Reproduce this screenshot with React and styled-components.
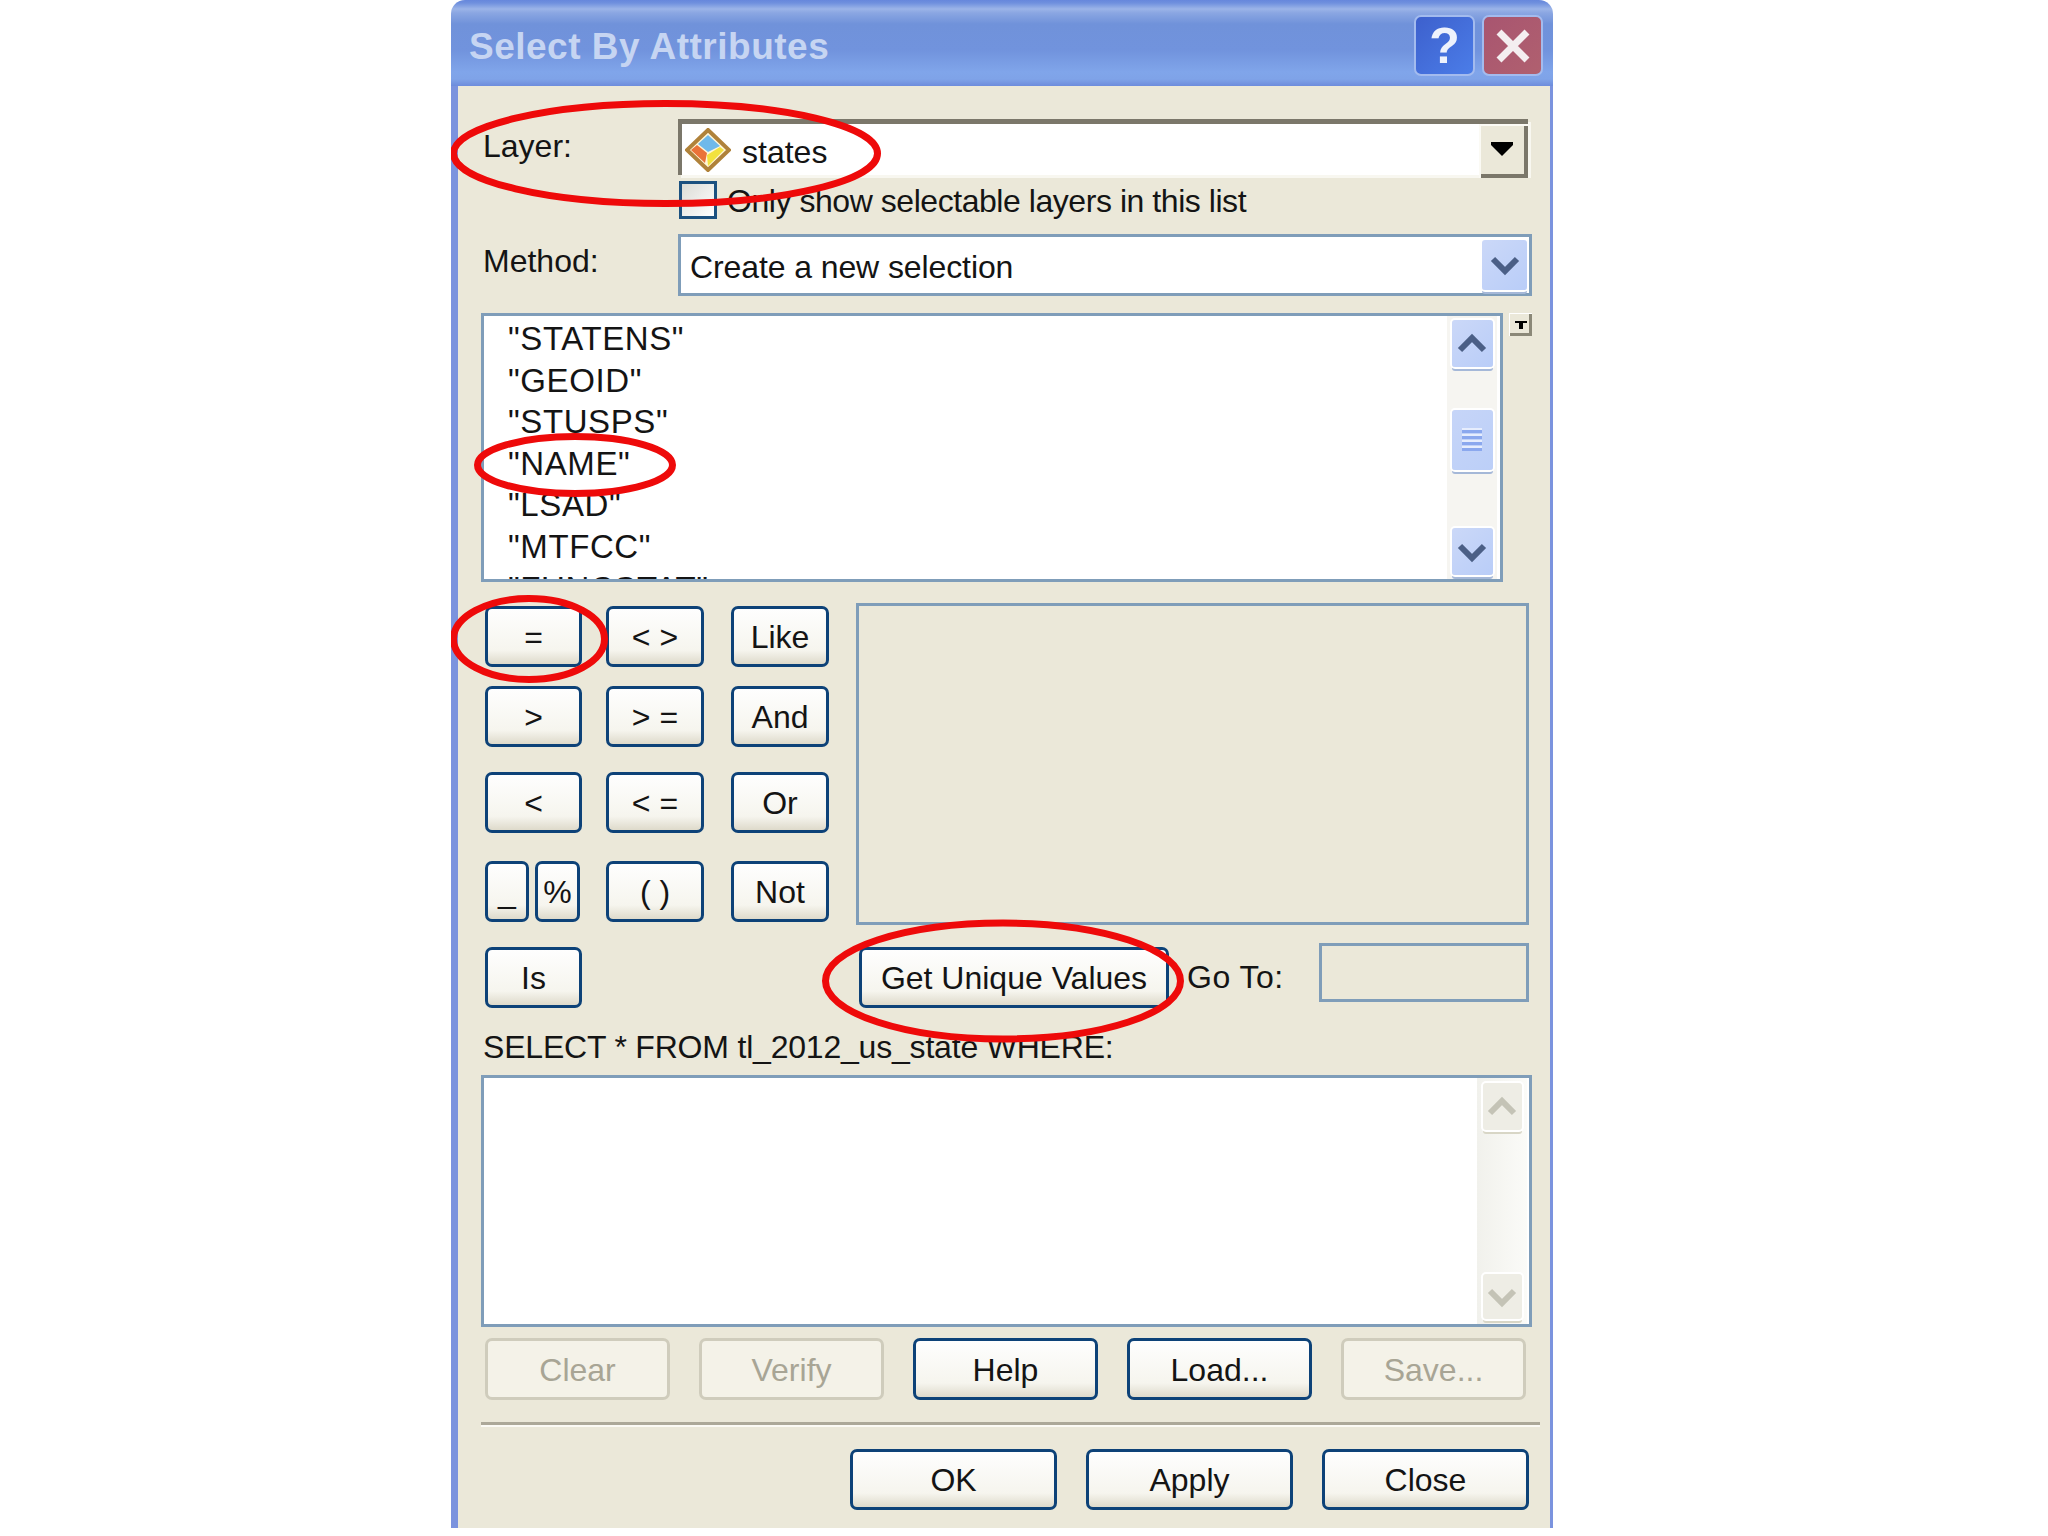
import React from "react";
import styled, { createGlobalStyle } from "styled-components";

const Global = createGlobalStyle`
  html, body { margin: 0; padding: 0; background: #fff; }
  * { box-sizing: border-box; }
  body { font-family: "Liberation Sans", Arial, sans-serif; font-size: 32px; color: #141414; }
`;

const Page = styled.div`
  width: 2048px;
  height: 1536px;
  padding-left: 451px;
  background: #fff;
`;
const Dialog = styled.div`
  position: relative;
  width: 1102px;
  height: 1528px;
  display: flex;
  flex-direction: column;
  border-radius: 14px 14px 0 0;
  overflow: hidden;
`;
const TitleBar = styled.div`
  height: 86px;
  flex: none;
  padding: 11px 10px 0 18px;
  display: flex;
  align-items: flex-start;
  justify-content: space-between;
  background: linear-gradient(#6687dc 0, #6f90de 3px, #9bb4e8 9px, #8aa6e2 13px, #7092da 24px, #7193dd 50px, #80a5ea 72px, #7fa3e8 79px, #6d8cdc 86px);
`;
const Title = styled.div`
  font-size: 37px;
  font-weight: 700;
  line-height: 50px;
  margin-top: 11px;
  color: #c6d5f2;
  letter-spacing: 0.5px;
`;
const CaptionButtons = styled.div`
  display: flex;
  gap: 7px;
  margin-top: 4px;
`;
const CaptionButton = styled.div`
  width: 61px;
  height: 61px;
  display: flex;
  align-items: center;
  justify-content: center;
  border: 2px solid #a3bbee;
  border-radius: 7px;
  background: ${(p) => (p.$danger ? "linear-gradient(135deg,#a85570,#b0606f)" : "linear-gradient(135deg,#3d60cd,#4b7de8)")};
  color: #eef2fc;
  font-size: 50px;
  font-weight: 700;
`;
const Body = styled.div`
  flex: 1;
  background: #ebe8d9;
  border-left: 7px solid #7b93de;
  border-right: 3px solid #7b93de;
  padding: 33px 18px 0 23px;
`;
const FormRow = styled.div`
  display: grid;
  grid-template-columns: 197px 1fr;
  align-items: center;
  margin-top: ${(p) => p.$top || 0}px;
`;
const FieldLabel = styled.div`
  padding-left: 2px;
  margin-top: ${(p) => p.$shift || 0}px;
`;
const ClassicCombo = styled.div`
  height: 56px;
  margin-right: 4px;
  display: flex;
  align-items: stretch;
  background: #fff;
  border-top: 5px solid #7b776a;
  border-left: 4px solid #7b776a;
  box-shadow: 3px 3px 0 #f8f7f0;
`;
const LayerValue = styled.div`
  flex: 1;
  display: flex;
  align-items: center;
  padding-left: 3px;
  gap: 11px;
`;
const LayerName = styled.span`
  margin-top: 6px;
`;
const ClassicArrow = styled.div`
  width: 49px;
  display: flex;
  align-items: center;
  justify-content: center;
  background: #ebe8d9;
  box-shadow: inset 2px 2px 0 #fbfaf4, inset -4px -4px 0 #7b776a;
  margin-bottom: -3px;
  padding: 0 4px 4px 0;
`;
const CheckBox = styled.div`
  width: 38px;
  height: 38px;
  border: 3px solid #1c5180;
  background: linear-gradient(135deg, #dcdcd6, #fff);
`;
const CheckLine = styled.div`
  display: flex;
  align-items: center;
  gap: 10px;
  margin-left: 1px;
`;
const CheckText = styled.span`
  letter-spacing: -0.45px;
  line-height: 34px;
  margin-top: 2px;
`;
const XpCombo = styled.div`
  height: 62px;
  display: flex;
  align-items: center;
  justify-content: space-between;
  padding: 0 2px 0 9px;
  background: #fff;
  border: 3px solid #7f9db9;
`;
const ComboText = styled.span`
  margin-top: 4px;
  letter-spacing: -0.1px;
`;
const ScrollBtn = styled.div`
  flex: none;
  width: ${(p) => p.$w || 41}px;
  height: ${(p) => p.$h || 47}px;
  display: flex;
  align-items: center;
  justify-content: center;
  border-radius: 3px;
  background: ${(p) => (p.$off ? "#eeede5" : "linear-gradient(135deg,#cbd8f8,#b9cdf8)")};
  box-shadow: 0 0 0 2px #fff, ${(p) => (p.$off ? "0 4px 0 #d8d6c6" : "0 4px 0 #a5b8d8")};
`;
const ListLine = styled.div`
  display: flex;
  align-items: flex-start;
  gap: 6px;
  margin-top: 17px;
`;
const ListBox = styled.div`
  width: 1022px;
  height: 269px;
  display: flex;
  background: #fff;
  border: 3px solid #7f9db9;
`;
const ListRows = styled.div`
  flex: 1;
  padding: 2px 0 0 24px;
  overflow: hidden;
`;
const ListRow = styled.div`
  height: 41.6px;
  font-size: 33px;
  letter-spacing: 0.6px;
  line-height: 41.6px;
  white-space: nowrap;
`;
const ScrollTrack = styled.div`
  flex: none;
  width: ${(p) => p.$w || 50}px;
  margin-right: ${(p) => p.$mr || 3}px;
  padding: ${(p) => p.$pad || 4}px 0;
  display: flex;
  flex-direction: column;
  align-items: center;
  background: ${(p) => (p.$off ? "linear-gradient(90deg,#f1f1ec,#fbfbf8)" : "#f6f5f1")};
`;
const Thumb = styled.div`
  width: 41px;
  height: 60px;
  margin-top: 43px;
  margin-bottom: auto;
  display: flex;
  flex-direction: column;
  align-items: center;
  justify-content: center;
  gap: 3px;
  border-radius: 3px;
  background: linear-gradient(135deg, #c6d5f8, #bccff8);
  box-shadow: 0 0 0 2px #fff, 0 4px 0 #a5b8d8;
`;
const Grip = styled.div`
  width: 20px;
  height: 3px;
  background: #8ba8ee;
  box-shadow: 0 -2px 0 #e6edfd;
`;
const TinyDrop = styled.div`
  width: 23px;
  height: 23px;
  display: flex;
  align-items: center;
  justify-content: center;
  background: #ebe8d9;
  box-shadow: inset 1px 1px 0 #fff, inset -3px -3px 0 #8b8878;
`;
const CalcTop = styled.div`
  display: grid;
  grid-template-columns: 375px 1fr;
  margin-top: 21px;
`;
const Keys = styled.div`
  padding: 3px 0 0 4px;
`;
const KeyRow = styled.div`
  display: grid;
  grid-template-columns: 97px 98px 101px;
  column-gap: 24px;
  margin-top: ${(p) => p.$top || 0}px;
  & > :last-child { margin-left: 3px; }
`;
const KeyPair = styled.div`
  display: grid;
  grid-template-columns: 44px 45px;
  column-gap: 6px;
  margin: 0 !important;
`;
const Btn = styled.div`
  height: ${(p) => p.$h || 61}px;
  width: ${(p) => (p.$w ? `${p.$w}px` : "auto")};
  margin-top: ${(p) => p.$top || 0}px;
  margin-left: ${(p) => p.$left || 0}px;
  padding-top: 2px;
  display: flex;
  align-items: center;
  justify-content: center;
  border: 3px solid ${(p) => (p.disabled ? "#cfccbc" : "#0d4278")};
  border-radius: 7px;
  background: ${(p) => (p.disabled ? "#f4f2e8" : "linear-gradient(#fefefe, #f6f5ee 75%, #dedacb)")};
  color: ${(p) => (p.disabled ? "#a8a595" : "#141414")};
  white-space: nowrap;
`;
const ValuesBox = styled.div`
  height: 322px;
  margin-right: 3px;
  border: 3px solid #7f9db9;
`;
const CalcBottom = styled.div`
  display: flex;
  align-items: flex-start;
  margin-top: 18px;
  padding-left: 4px;
`;
const GoToLabel = styled.div`
  margin: 4px 0 0 18px;
  line-height: 61px;
  letter-spacing: 0.5px;
`;
const GoToBox = styled.div`
  width: 210px;
  height: 59px;
  margin: 0 3px 0 auto;
  border: 3px solid #7f9db9;
`;
const SqlLabel = styled.div`
  height: 67px;
  padding: 22px 0 0 2px;
  line-height: 34px;
  letter-spacing: -0.2px;
  white-space: nowrap;
`;
const SqlBox = styled.div`
  height: 252px;
  display: flex;
  justify-content: flex-end;
  background: #fff;
  border: 3px solid #7f9db9;
`;
const Spacer = styled.div`
  flex: 1;
`;
const ActionRow = styled.div`
  display: grid;
  grid-template-columns: repeat(5, 185px);
  column-gap: 29px;
  margin-top: 11px;
  padding-left: 4px;
`;
const Separator = styled.div`
  height: 5px;
  margin: 22px -8px 0 0;
  background: #aca899;
  border-bottom: 2px solid #fbfaf5;
`;
const DialogRow = styled.div`
  display: flex;
  justify-content: flex-end;
  gap: 29px;
  margin: 22px 3px 0 0;
`;
const Annotations = styled.svg`
  position: absolute;
  inset: 0;
  pointer-events: none;
`;

const Chevron = ({ up, off }) => (
  <svg width="30" height="22" viewBox="0 0 30 22">
    <path
      d={up ? "M3 17 L15 5 L27 17" : "M3 5 L15 17 L27 5"}
      fill="none"
      stroke={off ? "#c4c3b6" : "#4b5f86"}
      strokeWidth="6"
    />
  </svg>
);

const LayerIcon = () => (
  <svg width="46" height="44" viewBox="0 0 46 44">
    <polygon points="23,2 44,22 23,42 2,22" fill="#fff6d8" stroke="#b0823a" strokeWidth="4" />
    <polygon points="23,7 35,18 23,24 13,16" fill="#6fb9ea" />
    <polygon points="12,17 22,25 20,35 6,22" fill="#ea7338" />
    <polygon points="35,19 39,22 23,38 22,27" fill="#f2e23e" />
  </svg>
);

const fields = ['"STATENS"', '"GEOID"', '"STUSPS"', '"NAME"', '"LSAD"', '"MTFCC"', '"FUNCSTAT"'];

export default function App() {
  return (
    <Page>
      <Global />
      <Dialog>
        <TitleBar>
          <Title>Select By Attributes</Title>
          <CaptionButtons>
            <CaptionButton>?</CaptionButton>
            <CaptionButton $danger>
              <svg width="36" height="36" viewBox="0 0 36 36">
                <path d="M4 4 L32 32 M32 4 L4 32" stroke="#f4eef0" strokeWidth="7" />
              </svg>
            </CaptionButton>
          </CaptionButtons>
        </TitleBar>
        <Body>
          <FormRow>
            <FieldLabel $shift={-2}>Layer:</FieldLabel>
            <ClassicCombo>
              <LayerValue>
                <LayerIcon />
                <LayerName>states</LayerName>
              </LayerValue>
              <ClassicArrow>
                <svg width="22" height="14" viewBox="0 0 22 14">
                  <path d="M0 0 H22 V3 L11 14 L0 3 Z" fill="#000" />
                </svg>
              </ClassicArrow>
            </ClassicCombo>
          </FormRow>
          <FormRow $top={6}>
            <span />
            <CheckLine>
              <CheckBox />
              <CheckText>Only show selectable layers in this list</CheckText>
            </CheckLine>
          </FormRow>
          <FormRow $top={15}>
            <FieldLabel $shift={-8}>Method:</FieldLabel>
            <XpCombo>
              <ComboText>Create a new selection</ComboText>
              <ScrollBtn $w={45} $h={50}>
                <Chevron />
              </ScrollBtn>
            </XpCombo>
          </FormRow>
          <ListLine>
            <ListBox>
              <ListRows>
                {fields.map((f) => (
                  <ListRow key={f}>{f}</ListRow>
                ))}
              </ListRows>
              <ScrollTrack>
                <ScrollBtn>
                  <Chevron up />
                </ScrollBtn>
                <Thumb>
                  <Grip />
                  <Grip />
                  <Grip />
                  <Grip />
                </Thumb>
                <ScrollBtn>
                  <Chevron />
                </ScrollBtn>
              </ScrollTrack>
            </ListBox>
            <TinyDrop>
              <svg width="12" height="8" viewBox="0 0 12 8">
                <path d="M0 0 H12 V2 H8 V8 H4 V2 H0 Z" fill="#000" />
              </svg>
            </TinyDrop>
          </ListLine>
          <CalcTop>
            <Keys>
              <KeyRow>
                <Btn>=</Btn>
                <Btn>&lt; &gt;</Btn>
                <Btn>Like</Btn>
              </KeyRow>
              <KeyRow $top={19}>
                <Btn>&gt;</Btn>
                <Btn>&gt; =</Btn>
                <Btn>And</Btn>
              </KeyRow>
              <KeyRow $top={25}>
                <Btn>&lt;</Btn>
                <Btn>&lt; =</Btn>
                <Btn>Or</Btn>
              </KeyRow>
              <KeyRow $top={28}>
                <KeyPair>
                  <Btn>_</Btn>
                  <Btn>%</Btn>
                </KeyPair>
                <Btn>( )</Btn>
                <Btn>Not</Btn>
              </KeyRow>
            </Keys>
            <ValuesBox />
          </CalcTop>
          <CalcBottom>
            <Btn $w={97} $top={4}>Is</Btn>
            <Btn $w={310} $top={4} $left={277}>Get Unique Values</Btn>
            <GoToLabel>Go To:</GoToLabel>
            <GoToBox />
          </CalcBottom>
          <SqlLabel>SELECT * FROM tl_2012_us_state WHERE:</SqlLabel>
          <SqlBox>
            <Spacer />
            <ScrollTrack $off $mr={2} $pad={5}>
              <ScrollBtn $off $w={39}>
                <Chevron up off />
              </ScrollBtn>
              <Spacer />
              <ScrollBtn $off $w={39} $h={45}>
                <Chevron off />
              </ScrollBtn>
            </ScrollTrack>
          </SqlBox>
          <ActionRow>
            <Btn disabled $h={62}>Clear</Btn>
            <Btn disabled $h={62}>Verify</Btn>
            <Btn $h={62}>Help</Btn>
            <Btn $h={62}>Load...</Btn>
            <Btn disabled $h={62}>Save...</Btn>
          </ActionRow>
          <Separator />
          <DialogRow>
            <Btn $w={207}>OK</Btn>
            <Btn $w={207}>Apply</Btn>
            <Btn $w={207}>Close</Btn>
          </DialogRow>
        </Body>
        <Annotations width="1102" height="1528">
          <g fill="none" stroke="#ee0a0a" strokeWidth="7">
            <ellipse cx="214.5" cy="153.5" rx="212" ry="50" />
            <ellipse cx="124" cy="465" rx="97.5" ry="28.5" />
            <ellipse cx="78" cy="639" rx="75.5" ry="40.5" />
            <ellipse cx="552" cy="981" rx="177.5" ry="58" />
          </g>
        </Annotations>
      </Dialog>
    </Page>
  );
}
